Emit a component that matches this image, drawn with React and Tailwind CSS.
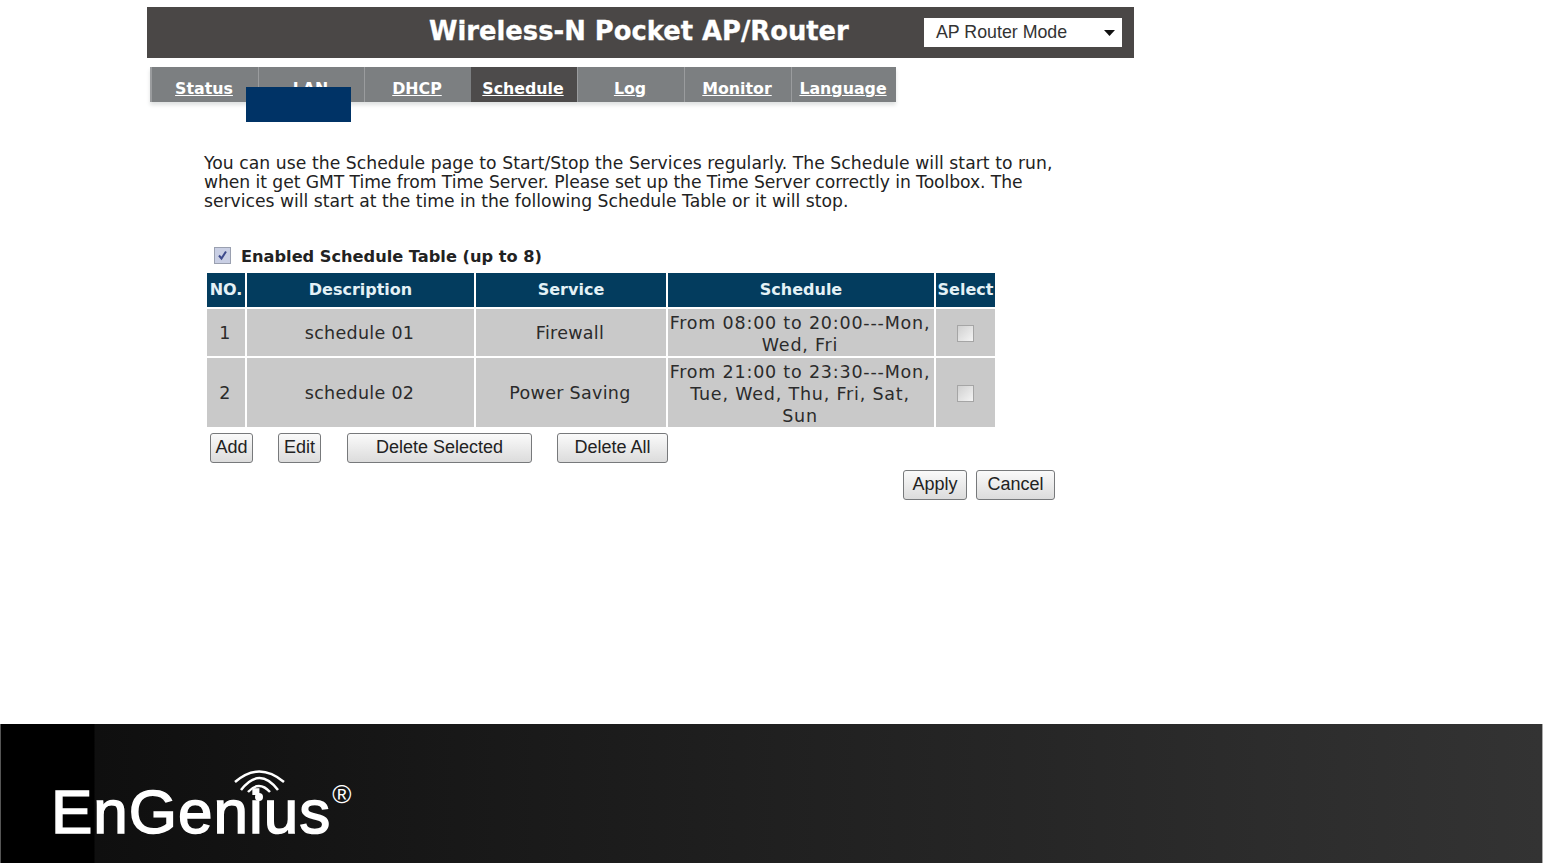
import React from 'react';

const tabs = [
  { name: 'Status', w: 'w-[108px]' },
  { name: 'LAN', w: 'w-[106px]' },
  { name: 'DHCP', w: 'w-[107px]' },
  { name: 'Schedule', w: 'w-[106px]', active: true },
  { name: 'Log', w: 'w-[107px]' },
  { name: 'Monitor', w: 'w-[107px]' },
  { name: 'Language', w: 'w-[105px]' },
];

const headers = ['NO.', 'Description', 'Service', 'Schedule', 'Select'];

const rows = [
  { no: 1, desc: 'schedule 01', service: 'Firewall', time: ['From 08:00 to 20:00---Mon,', 'Wed, Fri'] },
  { no: 2, desc: 'schedule 02', service: 'Power Saving', time: ['From 21:00 to 23:30---Mon,', 'Tue, Wed, Thu, Fri, Sat,', 'Sun'] },
];

function Btn({ className, children }) {
  return (
    <button className={`h-[30px] pb-[2px] rounded-[3px] border border-[#77797b] bg-gradient-to-b from-[#fafafa] to-[#dcdcdc] text-[18px] leading-none text-[#222] font-['Liberation_Sans',sans-serif] ${className}`}>
      {children}
    </button>
  );
}

function Box() {
  return <span className="block w-[17px] h-[17px] border border-[#a5a5a5] bg-gradient-to-br from-[#d0d0d0] to-[#f4f4f4]" />;
}

export default function App() {
  return (
    <div className="relative flex flex-col w-[1543px] h-[863px] overflow-hidden bg-white font-['DejaVu_Sans',sans-serif]">
      <div className="flex-1 pl-[147px] pt-[7px]">
        <div className="flex items-center w-[987px] h-[51px] bg-[#4a4746]">
          <h1 className="ml-[282px] w-[495px] pb-[2px] text-[25.800px] font-bold text-white whitespace-nowrap [-webkit-text-stroke:0.3px_white]">Wireless-N Pocket AP/Router</h1>
          <div className="flex items-center justify-between w-[198px] h-[29px] pl-3 pr-[7px] bg-white text-[17.800px] text-[#333] font-['Liberation_Sans',sans-serif]">
            AP Router Mode
            <svg width="11" height="6" viewBox="0 0 11 6"><path d="M0 0h11L5.500 6z" fill="#111" /></svg>
          </div>
        </div>

        <nav className="flex ml-[3px] mt-[9px] w-[746px] h-[35px] bg-[#7c7f81] border-l-2 border-[#9a9c9e] shadow-[0_3px_4px_#dfe1e1]">
          {tabs.map((t, i) => (
            <a key={t.name} className={`flex items-center justify-center pt-[9px] pr-[2px] ${i === 0 ? 'w-[106px]' : t.w} text-[15.800px] font-bold text-white underline whitespace-nowrap ${t.active ? 'bg-[#4d4b4b]' : ''} ${i > 0 && !t.active ? 'border-l border-[#9a9c9e]' : ''}`}>{t.name}</a>
          ))}
        </nav>

        <p className="ml-[57px] mt-[52px] w-[870px] text-[17.200px] leading-[19px] text-[#222] whitespace-nowrap">
          <span className="block tracking-[0.05px]">You can use the Schedule page to Start/Stop the Services regularly. The Schedule will start to run,</span>
          <span className="block tracking-[-0.07px]">when it get GMT Time from Time Server. Please set up the Time Server correctly in Toolbox. The</span>
          <span className="block">services will start at the time in the following Schedule Table or it will stop.</span>
        </p>

        <label className="flex items-center ml-[67px] mt-[37px] h-[18px] text-[16.200px] font-bold text-[#222]">
          <span className="flex items-center justify-center w-[17px] h-[17px] mb-[4px] border border-[#9aa0b0] bg-[#c9cfe4] text-[#3d4a8c] mr-[10px]">
            <svg width="11" height="11" viewBox="0 0 11 11"><path d="M2 5.500l2.500 3L9 1.500" fill="none" stroke="currentColor" strokeWidth="2" /></svg>
          </span>
          Enabled Schedule Table (up to 8)
        </label>

        <div className="grid grid-cols-[38px_227px_190px_266px_59px] grid-rows-[34px_47px_69px] gap-[2px] ml-[60px] mt-[7px] w-[788px] text-[17.500px] tracking-[0.3px] text-[#2b2b2b] text-center">
          {headers.map(h => (
            <div key={h} className="flex items-center justify-center bg-[#033c5e] text-[16px] tracking-normal font-bold text-[#e4f1f6] whitespace-nowrap overflow-hidden">{h}</div>
          ))}
          {rows.map(r => (
            <React.Fragment key={r.no}>
              <div className="flex items-center justify-center pt-[2px] pr-[2px] bg-[#c9c9c9]">{r.no}</div>
              <div className="flex items-center justify-center pt-[2px] pr-[2px] bg-[#c9c9c9]">{r.desc}</div>
              <div className="flex items-center justify-center pt-[2px] pr-[2px] bg-[#c9c9c9]">{r.service}</div>
              <div className="flex flex-col items-center justify-center pt-[2px] pr-[2px] bg-[#c9c9c9] leading-[22px] tracking-[0.8px] whitespace-nowrap">
                {r.time.map(l => <span key={l}>{l}</span>)}
              </div>
              <div className="flex items-center justify-center pt-[2px] bg-[#c9c9c9]"><Box /></div>
            </React.Fragment>
          ))}
        </div>

        <div className="flex ml-[63px] mt-[6px]">
          <Btn className="w-[43px]">Add</Btn>
          <Btn className="w-[43px] ml-[25px]">Edit</Btn>
          <Btn className="w-[185px] ml-[26px]">Delete Selected</Btn>
          <Btn className="w-[111px] ml-[25px]">Delete All</Btn>
        </div>
        <div className="flex justify-end w-[908px] mt-[7px] gap-[9px]">
          <Btn className="w-[64px]">Apply</Btn>
          <Btn className="w-[79px]">Cancel</Btn>
        </div>
      </div>

      <footer className="flex items-start h-[139px] pl-[50px] pt-[48px] border-l border-r border-l-[#555] border-r-[#aaa] bg-[linear-gradient(90deg,#000_0,#000_93px,#0f0f0f_94px,#333_100%)]">
        <div className="relative flex items-start text-white font-['Liberation_Sans',sans-serif]">
          <span className="text-[62px] leading-[80px] tracking-[1px] [-webkit-text-stroke:1.500px_white]">EnGenius</span>
          <span className="text-[26px] leading-[26px] mt-[9px] ml-[1px]">®</span>
          <svg className="absolute left-[183px] top-[-2px]" width="52" height="32" viewBox="0 0 52 32" fill="none" stroke="white" strokeWidth="2.500">
            <path d="M1 12Q25 -9 50 12" />
            <path d="M7 20Q25.500 -4 44 20" />
            <path d="M14 22Q25 10 36 22" />
            <circle cx="25" cy="27" r="4" fill="white" stroke="none" />
          </svg>
        </div>
      </footer>

      <div className="absolute left-[246px] top-[87px] w-[105px] h-[35px] bg-[#003366]" />
    </div>
  );
}
